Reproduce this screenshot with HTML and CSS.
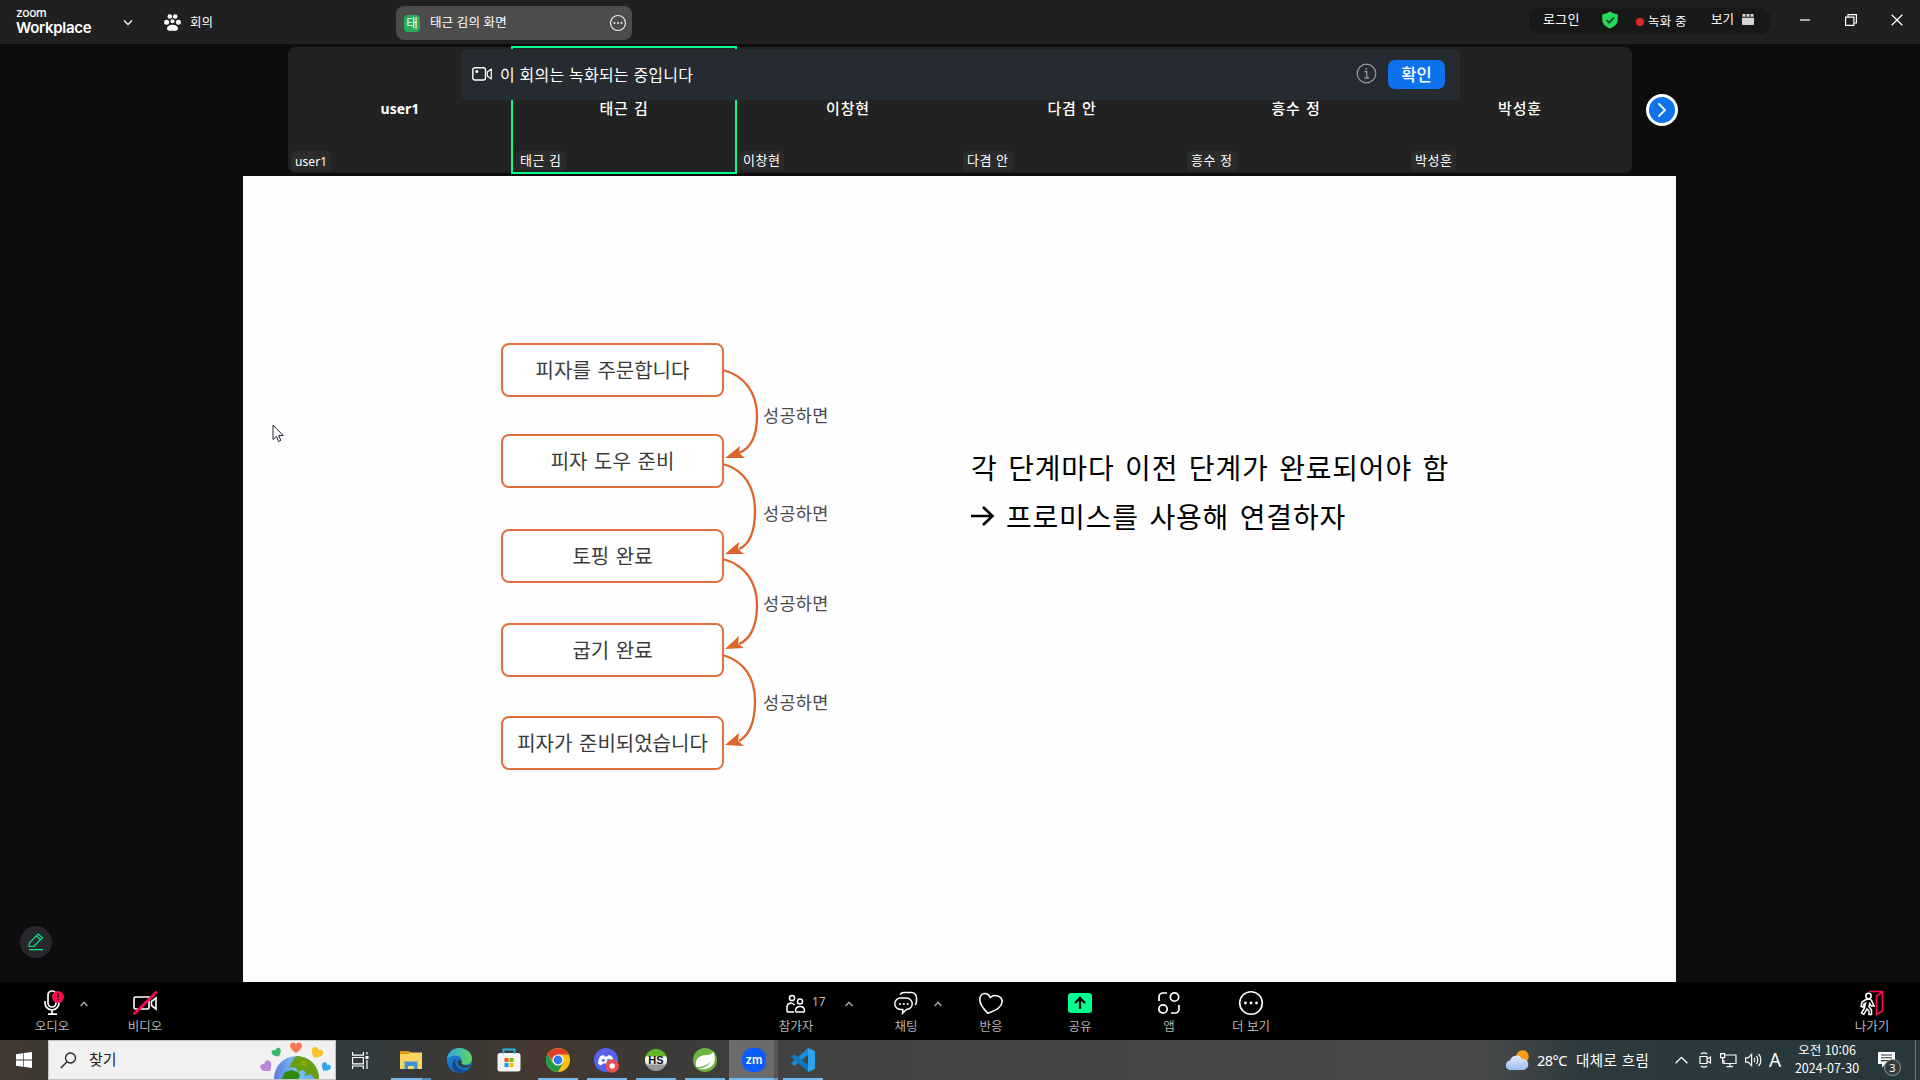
FILE: index.html
```html
<!DOCTYPE html>
<html lang="ko">
<head>
<meta charset="utf-8">
<title>Zoom Workplace</title>
<link rel="stylesheet" href="styles.css">
</head>
<body>
<div class="screen">
  <header class="topbar">
    <div class="brand"><span class="brand-small">zoom</span><span class="brand-big">Workplace</span></div>
    <svg class="brand-caret" width="10" height="8" viewBox="0 0 10 8"><path d="M1 1.5l4 4 4-4" fill="none" stroke="#fff" stroke-width="1.3"/></svg>
    <svg class="paw" width="17" height="17" viewBox="0 0 17 17" fill="#fff"><circle cx="5.8" cy="2.5" r="2.3"/><circle cx="11.2" cy="2.5" r="2.3"/><circle cx="2.6" cy="8.2" r="2.5"/><circle cx="14.4" cy="8.2" r="2.5"/><circle cx="8.5" cy="7.3" r="2"/><path d="M3 14.5c0-2 2-3.800 5.500-3.800s5.500 1.800 5.500 3.800c0 1.400-1 2.200-2.300 2.200H5.300C4 16.700 3 15.900 3 14.500z"/></svg>
    <span class="meeting">회의</span>
    <div class="share-tab">
      <span class="share-badge">태</span>
      <span class="share-name">태근 김의 화면</span>
      <svg width="18" height="18" viewBox="0 0 18 18"><circle cx="9" cy="9" r="7.500" fill="none" stroke="#eee" stroke-width="1.200"/><g fill="#eee"><circle cx="5.500" cy="9" r="1"/><circle cx="9" cy="9" r="1"/><circle cx="12.500" cy="9" r="1"/></g></svg>
    </div>
    <div class="status">
      <span class="login">로그인</span>
      <svg class="shield" width="16" height="18" viewBox="0 0 16 18"><path d="M8 .5C5.800 2 3 3 .3 3.200v5.600c0 4 3 6.800 7.700 8.700 4.700-1.900 7.700-4.700 7.700-8.700V3.200C13 3 10.200 2 8 .5z" fill="#23d959"/><path d="M4.500 9l2.600 2.600L12 6.700" fill="none" stroke="#103d1e" stroke-width="1.700"/></svg>
      <span class="rec-dot"></span>
      <span class="rec">녹화 중</span>
      <span class="view">보기</span>
      <svg width="12" height="12" viewBox="0 0 12 12" fill="#d4d4d4"><path d="M0 3.700h12V10a1 1 0 0 1-1 1H1a1 1 0 0 1-1-1z"/><path d="M.5 0h3v2.800h-3zM4.500 0h3v2.800h-3zM8.500 0h3v2.800h-3z"/></svg>
    </div>
    <div class="window-buttons">
      <svg width="12" height="12" viewBox="0 0 12 12"><path d="M1 6h10" stroke="#ccc" stroke-width="1.600"/></svg>
      <svg width="12" height="12" viewBox="0 0 12 12"><path d="M.6 3.100h8.300v8.300H.6zM3 3V.6h8.400V9H9" fill="none" stroke="#fff" stroke-width="1.200"/></svg>
      <svg width="12" height="12" viewBox="0 0 12 12"><path d="M.7.700l10.600 10.600M11.300.700L.7 11.300" stroke="#fff" stroke-width="1.300"/></svg>
    </div>
  </header>

  <main class="stage">
    <section class="gallery">
      <div class="tile latin"><b>user1</b><small>user1</small></div>
      <div class="tile active"><b>태근 김</b><small>태근 김</small></div>
      <div class="tile"><b>이창현</b><small>이창현</small></div>
      <div class="tile"><b>다겸 안</b><small>다겸 안</small></div>
      <div class="tile"><b>흥수 정</b><small>흥수 정</small></div>
      <div class="tile"><b>박성훈</b><small>박성훈</small></div>
    </section>
    <div class="next"><svg width="12" height="16" viewBox="0 0 12 16"><path d="M3 2l6 6-6 6" fill="none" stroke="#fff" stroke-width="1.800" stroke-linecap="round"/></svg></div>
    <div class="notice">
      <svg width="21" height="14" viewBox="0 0 21 14"><rect x=".8" y=".8" width="12.700" height="12.200" rx="2" fill="none" stroke="#fff" stroke-width="1.400"/><circle cx="4.800" cy="4.600" r="1.500" fill="#fff"/><path d="M15.300 5l4-3v10l-4-3z" fill="none" stroke="#fff" stroke-width="1.200" stroke-linejoin="round"/></svg>
      <span class="notice-text">이 회의는 녹화되는 중입니다</span>
      <svg class="info" width="21" height="21" viewBox="0 0 21 21" fill="none" stroke="#92959b"><circle cx="10.500" cy="10.500" r="9.300" stroke-width="1.300"/><path d="M8.500 8.500h2.300v6.500M8.300 15h5" stroke-width="1.300"/><path d="M10.300 5v1.700" stroke-width="1.600"/></svg>
      <span class="ok">확인</span>
    </div>

    <section class="slide">
      <div class="flow">
        <svg class="arrows" width="350" height="440" viewBox="0 0 350 440" fill="none" stroke="#df6429" stroke-width="2.300">
          <path d="M222 27C244 33 256 50 256 73S248 106 238 110"/>
          <path d="M222 121C244 127 254 145 254 168S247 202 238 206"/>
          <path d="M222 216C244 222 256 239 256 262S248 297 238 301"/>
          <path d="M222 312C244 319 254 335 254 358S247 393 238 398"/>
          <g fill="#df6429" stroke="none"><path d="M224 115l15-12-1 7 6 5z"/><path d="M224 211l14-12-1 7 6 5z"/><path d="M224 306l14-13-1 8 6 4z"/><path d="M224 402l14-12-1 8 6 5z"/></g>
        </svg>
        <div class="node n1">피자를 주문합니다</div>
        <div class="node n2">피자 도우 준비</div>
        <div class="node n3">토핑 완료</div>
        <div class="node n4">굽기 완료</div>
        <div class="node n5">피자가 준비되었습니다</div>
        <span class="edge e1">성공하면</span>
        <span class="edge e2">성공하면</span>
        <span class="edge e3">성공하면</span>
        <span class="edge e4">성공하면</span>
      </div>
      <div class="note">
        <p class="note-a">각 단계마다 이전 단계가 완료되어야 함</p>
        <p class="note-b"><svg width="24" height="22" viewBox="0 0 24 22"><path d="M0 11h20M12 2l9.500 9L12 20" fill="none" stroke="#000" stroke-width="2.600"/></svg><span>프로미스를 사용해 연결하자</span></p>
      </div>
    </section>

    <div class="pen"><svg width="16" height="18" viewBox="0 0 16 18" fill="none" stroke="#10e585" stroke-width="1.200"><path d="M1 13.500l.7-4L10.200 1l4.300 3.700-8.800 8.800zM8.500 3l4 3.800M1 16.600h14"/></svg></div>
    <svg class="cursor" width="13" height="20" viewBox="0 0 13 20"><path d="M1 1v14.500l3.400-3.200 2.200 5.200 2.300-1-2.200-5H11.200z" fill="#fff" stroke="#223"/></svg>
  </main>

  <footer class="controls">
    <div class="ctl c-audio"><svg width="24" height="26" viewBox="0 0 24 26"><g fill="none" stroke="#fff" stroke-width="1.700"><rect x="8" y="1" width="8" height="16" rx="4"/><path d="M5 11v2a7 7 0 0 0 14 0v-2M12 20v4M8 24.200h9"/></g><circle cx="18" cy="7" r="6" fill="#ff0a50"/><path d="M18 3.500v4.300M18 9v1.700" stroke="#300" stroke-width="1.700"/></svg><span>오디오</span></div>
    <svg class="up u1" width="8" height="6" viewBox="0 0 8 6"><path d="M.6 5L4 1.300 7.400 5"/></svg>
    <div class="ctl c-video"><svg width="26" height="26" viewBox="0 0 26 26" fill="none"><g stroke="#fff" stroke-width="1.600"><path d="M17 7H3.500A1.500 1.500 0 0 0 2 8.500V17a2 2 0 0 0 2 2h11.500a1.500 1.500 0 0 0 1.500-1.500z"/><path d="M24 8l-4.500 3.500v4L24 19z"/></g><path d="M2.500 23.500L24 2.500" stroke="#ff0a50" stroke-width="2.700" stroke-linecap="round"/></svg><span>비디오</span></div>
    <div class="ctl c-people"><svg width="20" height="24" viewBox="0 0 20 24" fill="none" stroke="#fff" stroke-width="1.500"><circle cx="6" cy="7" r="2.600"/><circle cx="14" cy="10.500" r="2.500"/><path d="M8 21H2.200A1.200 1.200 0 0 1 1 19.800V16a4 4 0 0 1 7.500-1.800M10.500 21h7a1 1 0 0 0 1-1c0-3-2-4.500-4.500-4.500S9.500 17 9.500 20a1 1 0 0 0 1 1z"/></svg><span>참가자</span></div>
    <em class="count">17</em>
    <svg class="up u2" width="8" height="6" viewBox="0 0 8 6"><path d="M.6 5L4 1.300 7.400 5"/></svg>
    <div class="ctl c-chat"><svg width="24" height="24" viewBox="0 0 24 24" fill="none" stroke="#fff" stroke-width="1.500"><path d="M6 3.500C7 2 8.500 1.500 10 1.500h7.500A5 5 0 0 1 22.500 6.500V11c0 1.300-.6 2.200-1.500 2.800"/><path d="M6.500 7h6a5.500 5.500 0 0 1 0 11.500L8.500 22.300l.3-3.800H6.500A5.500 5.500 0 0 1 6.500 7z"/><g fill="#fff" stroke="none"><circle cx="6" cy="13" r="1.100"/><circle cx="9.800" cy="13" r="1.100"/><circle cx="13.600" cy="13" r="1.100"/></g></svg><span>채팅</span></div>
    <svg class="up u3" width="8" height="6" viewBox="0 0 8 6"><path d="M.6 5L4 1.300 7.400 5"/></svg>
    <div class="ctl c-react"><svg width="26" height="24" viewBox="0 0 26 24" fill="none" stroke="#fff" stroke-width="1.600"><path d="M10 22.300C6 18.500 1.800 14 1.800 8.500c0-3.500 2-6 5-6 2.500 0 4.500 1.500 5.500 4 2-1.700 4.300-2.300 6.500-1.800 3.500.8 5.500 3.500 5.300 6.300-.3 5.500-7.500 9-14.100 11.300z"/></svg><span>반응</span></div>
    <div class="ctl c-share"><svg width="24" height="24" viewBox="0 0 24 24"><rect y="2" width="24" height="20" rx="3" fill="#00ff8f"/><path d="M12 18V7.500M7 12l5-5 5 5" fill="none" stroke="#000" stroke-width="2.300"/></svg><span>공유</span></div>
    <div class="ctl c-apps"><svg width="24" height="24" viewBox="0 0 24 24" fill="none" stroke="#fff" stroke-width="1.700"><circle cx="17.500" cy="6" r="4.200"/><circle cx="6" cy="18" r="4.200"/><path d="M2 10V6a4 4 0 0 1 4-4h4M22 14v4a4 4 0 0 1-4 4h-4"/></svg><span>앱</span></div>
    <div class="ctl c-more"><svg width="26" height="26" viewBox="0 0 26 26"><circle cx="13" cy="13" r="11.300" fill="none" stroke="#fff" stroke-width="1.600"/><g fill="#fff"><circle cx="7.500" cy="13" r="1.400"/><circle cx="13" cy="13" r="1.400"/><circle cx="18.500" cy="13" r="1.400"/></g></svg><span>더 보기</span></div>
    <div class="ctl c-leave"><svg width="24" height="26" viewBox="0 0 24 26" fill="none" stroke-width="1.500"><path d="M9 1.500h13.500V21L16.500 24.500V6l6-4" stroke="#ff0a50" stroke-width="1.700"/><g stroke="#fff"><circle cx="8.500" cy="6" r="2.700"/><path d="M6 9.500L2 12 1 16.500l2 .5 1-3 1.500-.8L4.500 18 1.500 23l2.300 1.300L7 19l2 2v3.500h2.500V20L9 16.500l.7-3 1.800 2.500h2.500L11.500 10.500 10 9z"/></g></svg><span>나가기</span></div>
  </footer>

  <div class="taskbar">
    <div class="start"><svg width="16" height="16" viewBox="0 0 16 16" fill="#fff"><path d="M0 2.200L7 1.200v6.400H0zM7.700 1.100L16 0v7.600H7.700zM0 8.400h7v6.400l-7-1zM7.700 8.400H16V16l-8.300-1.200z"/></svg></div>
    <div class="search">
      <svg width="17" height="17" viewBox="0 0 17 17" fill="none" stroke="#222" stroke-width="1.300"><circle cx="10.500" cy="6" r="5"/><path d="M7 9.700L.8 16"/></svg>
      <span>찾기</span>
      <svg class="earth" width="72" height="38" viewBox="0 0 72 38">
        <defs><linearGradient id="sea" x1="0" y1="0" x2="1" y2="0"><stop offset="0" stop-color="#5b79dc"/><stop offset=".5" stop-color="#7cc4fb"/><stop offset="1" stop-color="#5ba0ee"/></linearGradient><clipPath id="globe"><circle cx="36.500" cy="37.500" r="22.500"/></clipPath>
        <path id="heart" d="M0 5C-3.500 2.500-6 .5-6-2.200-6-4.200-4.500-5.500-2.900-5.500-1.600-5.500-.5-4.800 0-3.700.5-4.800 1.600-5.500 2.900-5.500 4.500-5.500 6-4.200 6-2.200 6 .5 3.500 2.500 0 5z"/></defs>
        <circle cx="36.500" cy="37.500" r="22.500" fill="url(#sea)"/>
        <g clip-path="url(#globe)"><path d="M34 17l4-3 12 4 10 11v10l-5-1-4-5-6 2 1-4-4-2-4 2-2-4-4-1-3 1z" fill="#689e12"/><path d="M25 31l7-2 6 2 2 3-2 5H21z" fill="#2f8a12"/><path d="M42 18l6 4-2 4-6-2z" fill="#8aa800"/></g>
        <use href="#heart" transform="translate(36 7)" fill="#f77758"/>
        <use href="#heart" transform="translate(17 12) rotate(-28) scale(.8)" fill="#3bb969"/>
        <use href="#heart" transform="translate(56.500 12.500) rotate(28)" fill="#f9c32c"/>
        <use href="#heart" transform="translate(7 26) rotate(-40)" fill="#b888dd"/>
        <use href="#heart" transform="translate(65.500 26.500) rotate(35) scale(.8)" fill="#36a5ef"/>
      </svg>
    </div>
    <div class="task tv"><svg width="17" height="17" viewBox="0 0 17 17" fill="none" stroke="#fff" stroke-width="1.200"><path d="M.6 0v3.200h10.800V0M.6 17v-3H11.400v3M.6 5.500h10.800v6.400H.6zM15 0v2.500M15 8v9"/><path d="M13.500 4h3v3h-3z" fill="#fff" stroke="none"/></svg></div>
    <div class="task run stacked"><svg width="22" height="20" viewBox="0 0 22 20"><path d="M0 1h9l2 2v3H0z" fill="#d99812"/><path d="M0 4h8l2-1.500h12V19H0z" fill="#fcd462"/><path d="M4.500 19v-7.500h13V19h-3.500v-3H8v3z" fill="#3c94d6"/></svg></div>
    <div class="task"><svg width="25" height="25" viewBox="0 0 24 24"><defs><linearGradient id="edgeTop"><stop stop-color="#2ba4e8"/><stop offset="1" stop-color="#62d75b"/></linearGradient></defs><circle cx="12" cy="12" r="12" fill="#1778c9"/><path d="M0 11C.5 4 6 0 12 0c7 0 12 5 12 10 0 4-3 6-6.500 6-3 0-4.500-1-3.500-2.500C15 10 12 7.500 8 7.500c-4 0-7 2-8 3.500z" fill="url(#edgeTop)"/><path d="M8 13c0 5 4 8 9 8 2 0 4-.7 5-1.300C20 22.500 16 24 12.500 24 7 24 4 19 5 15c.5-3 3-5 5.500-5.200C9 10.500 8 11.500 8 13z" fill="#124b8d"/><path d="M10 13.500c.5 4 5 6 9 5.300 2-.3 4.500-1.500 5.500-3-1.500.8-3.500 1.200-5.300 1.100-4.500-.1-6-2-4.900-3.400-.5-2.500-4.500-3-4.300 0z" fill="#353b3d"/></svg></div>
    <div class="task"><svg width="24" height="24" viewBox="0 0 24 24"><path d="M6.500 7V1.500h11V7" fill="none" stroke="#27b3ea" stroke-width="2"/><rect x=".5" y="5" width="23" height="18.500" rx="2.500" fill="#f4f4f4"/><path d="M6 6V5h1.200v1zM16.800 6V5H18v1z" fill="#27b3ea"/><path d="M7.500 10h4v4h-4z" fill="#f25022"/><path d="M12.500 10h4v4h-4z" fill="#7fba00"/><path d="M7.500 15h4v4h-4z" fill="#00a4ef"/><path d="M12.500 15h4v4h-4z" fill="#ffb900"/></svg></div>
    <div class="task run"><svg width="24" height="24" viewBox="0 0 24 24"><circle cx="12" cy="12" r="12" fill="#fbc116"/><path d="M1.600 6A12 12 0 0 0 12 24l5-9-10 0z" fill="#229a48"/><path d="M1.600 6A12 12 0 0 1 22.400 6.500H12L6.800 13z" fill="#e33b2e"/><circle cx="12" cy="12" r="5.600" fill="#fff"/><circle cx="12" cy="12" r="4.400" fill="#3479e8"/></svg></div>
    <div class="task run"><svg width="25" height="25" viewBox="0 0 25 25"><circle cx="12" cy="12" r="12" fill="#5662ee"/><path d="M6 8.500c2-1.500 3.500-1.500 4-1l.5 1h3l.5-1c.5-.5 2-.5 4 1 1.500 3 2 5 1.700 7.500-1.500 1-3 1.500-3.500 1l-.8-1.500H8.500L7.700 17c-.5.500-2 0-3.500-1C4 13.500 4.500 11.500 6 8.500z" fill="#fff"/><circle cx="9.300" cy="12.300" r="1.500" fill="#5662ee"/><circle cx="14.500" cy="12.300" r="1.500" fill="#5662ee"/><circle cx="18.200" cy="18" r="6.800" fill="#e74c51"/><circle cx="18.200" cy="18" r="2.700" fill="#fff"/></svg></div>
    <div class="task run"><svg width="22" height="22" viewBox="0 0 22 22"><defs><linearGradient id="hs" x1="0" y1="0" x2="0" y2="1"><stop offset=".3" stop-color="#67b52c"/><stop offset=".38" stop-color="#fff"/><stop offset=".65" stop-color="#eee"/><stop offset=".75" stop-color="#999"/></linearGradient></defs><circle cx="11" cy="11" r="11" fill="url(#hs)"/><text x="11" y="15" text-anchor="middle" class="hs-text">HS</text></svg></div>
    <div class="task run"><svg width="24" height="24" viewBox="0 0 24 24"><circle cx="12" cy="12" r="12" fill="#6db33f"/><path d="M20.500 3.500c2 6 2 11-1.500 14.500-4 3.500-9.500 3.500-14.500 2.800 6-.6 11.500-2.800 13.500-7.800-3.500 4-8 6-14.500 6C1.500 14 4 9.500 8 8c4-1.500 9.500 0 12.500-4.500z" fill="#fff"/></svg></div>
    <div class="task run on"><svg width="24" height="24" viewBox="0 0 24 24"><rect width="24" height="24" rx="10" fill="#0b5cff"/><text x="12" y="15.500" text-anchor="middle" class="zm-text">zm</text></svg></div>
    <div class="task run"><svg width="24" height="24" viewBox="0 0 24 24"><path d="M17 0l7 3v18l-7 3z" fill="#2ba4ee"/><path d="M17 0v7L3.500 18 0 15.500z" fill="#178fd6"/><path d="M17 24v-7L3.500 6 0 8.500z" fill="#0d76bd"/></svg></div>
    <div class="tray">
      <svg class="weather" width="25" height="21" viewBox="0 0 25 21"><defs><linearGradient id="cl" x1="0" y1="0" x2="0" y2="1"><stop stop-color="#e3ebf9"/><stop offset="1" stop-color="#9abcf3"/></linearGradient></defs><circle cx="17.500" cy="6.500" r="6.300" fill="#f79d18"/><path d="M5 20a4.800 4.800 0 0 1 0-9.500 6.500 6.500 0 0 1 12-1.500 5.600 5.600 0 0 1 2 11z" fill="url(#cl)"/></svg>
      <span class="temp">28°C</span><span class="sky">대체로 흐림</span>
      <svg class="t-up" width="13" height="8" viewBox="0 0 13 8"><path d="M.6 7.200l5.900-5.900 5.900 5.900" fill="none" stroke="#fff" stroke-width="1.300"/></svg>
      <svg class="t-cam" width="13" height="16" viewBox="0 0 13 16" fill="none" stroke="#fff" stroke-width="1.200"><path d="M1 4.500h7v7H1zM8 7l3.500-2v6L8 9M2 2c1.500-1.500 4.500-1.500 6 0M2 14c1.500 1.500 4.500 1.500 6 0"/></svg>
      <svg class="t-net" width="17" height="15" viewBox="0 0 17 15" fill="none" stroke="#fff" stroke-width="1.200"><path d="M5 2h11v8.500H4V7M10 10.500v3M6.500 13.700H13M.6.600h4v4h-4zM2.600 4.600v6"/></svg>
      <svg class="t-vol" width="17" height="14" viewBox="0 0 17 14" fill="none" stroke="#fff" stroke-width="1.200"><path d="M.6 4.800h2.500l3.500-3.500v11.400L3.100 9.200H.6zM9 5c1 1 1 3 0 4M11.300 3c2 2 2 6 0 8M13.600 1c3 3 3 9 0 12"/></svg>
      <span class="ime">A</span>
      <div class="clock"><span>오전 10:06</span><span>2024-07-30</span></div>
      <div class="alerts"><svg width="17" height="16" viewBox="0 0 17 16"><path d="M0 0h17v12H7.500L4 15.500V12H0z" fill="#fff"/><path d="M3 3h11M3 5.800h11M3 8.600h8" stroke="#2a383c" stroke-width="1.100"/></svg><i>3</i></div>
    </div>
  </div>
</div>
</body>
</html>
```
FILE: styles.css
```css
* { box-sizing: border-box; }
body { margin: 0; background: #0d0d0d; color: #fff; font-family: "Noto Sans CJK KR", "Noto Sans", sans-serif; font-size: 12px; overflow: hidden; }
svg { display: block; flex: none; }
span, b, small, em { white-space: nowrap; flex: none; }
p { margin: 0; }
.screen { width: 1920px; height: 1080px; display: flex; flex-direction: column; }

.topbar { height: 44px; background: #202020; display: flex; align-items: flex-start; flex: none; }
.brand { width: 107px; margin-left: 16px; padding-top: 6px; display: flex; flex-direction: column; font-family: Inter, sans-serif; }
.brand-small { font-size: 12px; line-height: 13px; font-weight: 500; letter-spacing: -.3px; }
.brand-big { font-size: 15px; line-height: 17px; font-weight: 600; letter-spacing: -.3px; }
.brand-caret { margin: 19px 31px 0 0; }
.paw { margin-top: 14px; }
.meeting { margin: 12px 0 0 9px; line-height: 20px; width: 206px; font-size: 12.5px; }
.share-tab { width: 236px; height: 34px; margin-top: 6px; border-radius: 8px; background: #4c4c4c; display: flex; align-items: center; padding: 0 5px 0 8px; }
.share-badge { width: 16px; height: 17px; border-radius: 4px; background: #24ad5a; font-size: 12.5px; line-height: 15px; text-align: center; }
.share-name { flex: 1; margin-left: 10px; padding-bottom: 2px; font-size: 12.5px; line-height: 20px; letter-spacing: .1px; }
.status { width: 241px; height: 26px; margin: 8px 0 0 897px; border-radius: 9px; background: #181818; display: flex; align-items: flex-start; }
.login { width: 73px; padding-left: 14px; line-height: 22px; font-size: 13px; letter-spacing: .3px; }
.shield { margin-top: 3px; }
.rec-dot { width: 8px; height: 8px; margin: 10px 4px 0 18px; border-radius: 50%; background: #e02828; }
.rec { width: 63px; line-height: 25px; font-size: 12.5px; letter-spacing: .2px; }
.view { width: 31px; line-height: 22px; font-size: 12.5px; }
.status > :last-child { margin-top: 6px; }
.window-buttons { margin: 14px 0 0 29px; display: flex; gap: 34px; }

.stage { flex: 1; position: relative; display: flex; flex-direction: column; align-items: flex-start; min-height: 0; }
.gallery { width: 1344px; height: 126px; margin: 3px 0 0 288px; border-radius: 8px; background: #222; display: flex; flex: none; }
.tile { width: 224px; height: 126px; display: flex; flex-direction: column; align-items: center; justify-content: space-between; flex: none; padding: 51px 3px 2px; }
.tile b { font-size: 15px; line-height: 20px; font-weight: 500; letter-spacing: .9px; }
.tile small { align-self: flex-start; height: 20px; padding: 0 4px; border-radius: 4px; background: #2b2b2b; font-size: 13px; line-height: 17px; letter-spacing: .5px; }
.latin b { font: 700 14px/22px "Noto Sans", sans-serif; letter-spacing: 0; }
.latin small { font: 12px/21px "Noto Sans", sans-serif; letter-spacing: .1px; }
.active { width: 226px; height: 128px; margin: -1px -1px 0; border: 2px solid #00ff8f; padding-top: 50px; padding-bottom: 1px; }
.next { position: absolute; left: 1646px; top: 50px; width: 32px; height: 32px; border: 3px solid #fff; border-radius: 50%; background: #0e72ed; display: flex; align-items: center; justify-content: center; }
.notice { position: absolute; left: 461px; top: 5px; width: 999px; height: 51px; border-radius: 6px; background: #262a31; display: flex; align-items: center; padding: 0 15px 0 11px; }
.notice > svg:first-child { margin-top: -2px; }
.notice-text { flex: 1; margin-left: 7px; padding-bottom: 2px; font-size: 16px; line-height: 22px; letter-spacing: .2px; }
.info { margin: -2px 11px 0 0; }
.ok { width: 57px; height: 29px; border-radius: 7px; background: #0e72ed; text-align: center; font-size: 16.5px; line-height: 28px; font-weight: 500; }

.slide { width: 1433px; height: 806px; margin: 3px 0 0 243px; background: #fefefe; color: #000; display: flex; flex: none; padding: 167px 0 0 258px; }
.flow { position: relative; width: 350px; height: 440px; }
.arrows { position: absolute; left: 0; top: 0; }
.node { position: absolute; left: 0; width: 223px; height: 54px; border: 2px solid #e0703d; border-radius: 8px; background: #fff; color: #3a3a3c; font-size: 20px; line-height: 49px; word-spacing: 1px; text-align: center; white-space: nowrap; }
.n1 { top: 0; } .n2 { top: 91px; line-height: 50px; } .n3 { top: 186px; } .n4 { top: 280px; line-height: 50px; } .n5 { top: 373px; line-height: 50px; }
.edge { position: absolute; left: 262px; color: #4a4a4c; font-size: 17.500px; line-height: 24px; letter-spacing: .3px; }
.e1 { top: 60px; } .e2 { top: 158px; } .e3 { top: 248px; } .e4 { top: 347px; }
.note { margin: 100px 0 0 120px; font-size: 28px; line-height: 48px; letter-spacing: .8px; word-spacing: 2px; white-space: nowrap; }
.note-b { display: flex; align-items: center; gap: 11px; padding-top: 1px; }
.pen { position: absolute; left: 20px; top: 882px; width: 32px; height: 32px; border-radius: 50%; background: #26282d; display: flex; align-items: center; justify-content: center; }
.cursor { position: absolute; left: 272px; top: 380px; }

.controls { height: 58px; background: #000; display: grid; grid-template-columns: 28px 48px 12px 33px 48px 603px 48px 21px 33px 8px 48px 14px 23px 48px 41px 48px 41px 48px 34px 48px 573px 48px 1fr; flex: none; }
.ctl { grid-row: 1; width: 48px; padding-top: 6px; display: flex; flex-direction: column; align-items: center; color: #b4b4b4; }
.ctl svg { height: 30px; }
.ctl span { font-size: 12.500px; line-height: 16px; }
.c-audio { grid-column: 2; } .c-video { grid-column: 5; } .c-people { grid-column: 7; } .c-chat { grid-column: 11; }
.c-react { grid-column: 14; } .c-share { grid-column: 16; } .c-apps { grid-column: 18; } .c-more { grid-column: 20; } .c-leave { grid-column: 22; }
.up { grid-row: 1; margin: 19px 0 0 4px; fill: none; stroke: #aaa; stroke-width: 1.400; }
.u1 { grid-column: 3; } .u2 { grid-column: 9; } .u3 { grid-column: 12 / 14; }
.count { grid-row: 1; grid-column: 8; margin: 13px 0 0 -8px; font: 12px/14px "Noto Sans", sans-serif; color: #bbb; }

.taskbar { height: 40px; display: flex; flex: none; background: linear-gradient(90deg, #433a33 0, #3c3832 48px, #2f3b3e 340px, #453830 540px, #3b3936 640px, #424242 780px, #4a4a4a 1480px, #2c3a3e 1580px, #27373c 1920px); }
.start { width: 48px; display: flex; align-items: center; justify-content: center; }
.search { width: 288px; background: #f1f1f1; border: 1px solid #c4c4c4; color: #222; display: flex; align-items: center; padding-left: 11px; font-size: 15px; }
.search span { margin-left: 12px; padding-bottom: 2px; line-height: 22px; }
.earth { margin-left: auto; margin-right: 3px; }
.task { width: 49px; display: flex; align-items: center; justify-content: center; position: relative; }
.task.tv { width: 50px; padding-right: 2px; }
.run::after { content: ""; position: absolute; left: 5px; right: 4px; bottom: 0; height: 2px; background: #76b9ed; }
.stacked::after { background: linear-gradient(90deg, #76b9ed 31px, #5589b2 31px); }
.on { background: linear-gradient(90deg, #6b6b6b 45px, #555 45px); }
.on::after { left: 0; right: 0; background: linear-gradient(90deg, #76b9ed 45px, #5f95c0 45px); }
.hs-text { font: 700 11px "Liberation Sans", sans-serif; fill: #111; }
.zm-text { font: 600 11.500px Inter, sans-serif; fill: #fff; }
.tray { margin-left: auto; width: 416px; display: flex; align-items: center; }
.weather { margin-left: 1px; }
.temp { width: 39px; margin-left: 7px; padding-bottom: 1px; font: 14.500px/20px "Noto Sans", sans-serif; letter-spacing: -.5px; }
.sky { width: 99px; padding-bottom: 1px; font-size: 14.500px; line-height: 20px; letter-spacing: .4px; }
.t-cam { margin-left: 11px; } .t-net { margin-left: 8px; } .t-vol { margin-left: 8px; }
.ime { margin-left: 7px; width: 24px; font: 19px/24px "Noto Sans", sans-serif; }
.clock { display: flex; flex-direction: column; align-items: center; width: 68px; padding-bottom: 2px; font-size: 12.500px; line-height: 18px; }
.alerts { position: relative; margin-left: 17px; width: 38px; height: 16px; }
.alerts i { position: absolute; left: 6px; top: 7px; width: 17px; height: 17px; border: 1px solid #999; border-radius: 50%; background: #333b3f; font: 11px/15px "Noto Sans", sans-serif; text-align: center; }
.alerts::after { content: ""; position: absolute; right: 0; top: -12px; width: 1px; height: 40px; background: #6c787b; }
```
